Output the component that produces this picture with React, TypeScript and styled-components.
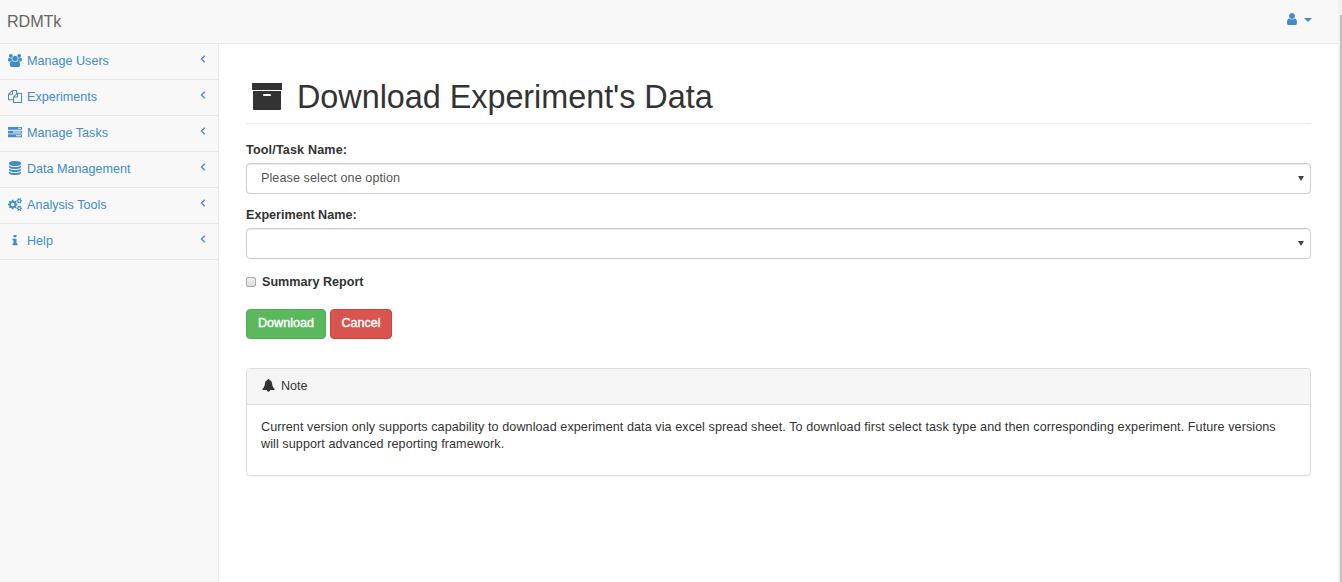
import React from "react";
import styled, { createGlobalStyle } from "styled-components";

const GlobalStyle = createGlobalStyle`
  * { box-sizing: border-box; }
  body {
    margin: 0;
    background: #fff;
    color: #333;
    font: 12.6px/18px "Liberation Sans", Arial, sans-serif;
    overflow: hidden;
  }
`;

const Page = styled.div`
  display: flex;
  height: 582px;
  width: 1342px;
`;

const Shell = styled.div`
  flex: 1;
  display: flex;
  flex-direction: column;
  min-width: 0;
`;

const ScrollTrack = styled.div`
  width: 4px;
  padding: 15px 0 0 2px;
  background: #f1f1f1;
`;

const ScrollThumb = styled.div`
  height: 100%;
  background: #c1c1c1;
`;

const Navbar = styled.header`
  height: 44px;
  flex: none;
  display: flex;
  justify-content: space-between;
  padding: 0 26px 0 7px;
  background: #f8f8f8;
  border-bottom: 1px solid #e7e7e7;
`;

const Brand = styled.span`
  font-size: 16.2px;
  line-height: 42px;
  letter-spacing: -0.1px;
  color: #666;
`;

const UserMenu = styled.a`
  display: flex;
  align-items: center;
  height: 38px;
  gap: 5px;
  color: #428bca;
`;

const Caret = styled.i`
  width: 0;
  margin-top: 2px;
  border-top: 4px solid #428bca;
  border-left: 4px solid transparent;
  border-right: 4px solid transparent;
`;

const Columns = styled.div`
  flex: 1;
  display: flex;
`;

const Sidebar = styled.nav`
  width: 219px;
  flex: none;
  background: #f8f8f8;
  border-right: 1px solid #e7e7e7;
`;

const NavItem = styled.a`
  display: flex;
  align-items: flex-start;
  height: 36px;
  padding: 8px 10px 0 8px;
  color: #428bca;
  border-bottom: 1px solid #e7e7e7;
`;

const NavIcon = styled.span`
  width: 14px;
  height: 15px;
  margin-right: 5px;
  display: flex;
  align-items: flex-end;
  justify-content: center;
`;

const NavLabel = styled.span`
  flex: 1;
`;

const Chevron = styled.svg`
  width: 6px;
  height: 8px;
  margin: 3px 2px 0 0;
  fill: none;
  stroke: #428bca;
  stroke-width: 1.3;
`;

const Main = styled.main`
  flex: 1;
  padding: 0 27px;
`;

const PageHeader = styled.h1`
  display: flex;
  align-items: center;
  height: 80px;
  margin: 0 0 17px;
  padding: 26px 0 0 6px;
  gap: 15px;
  border-bottom: 1px solid #eee;
  font-size: 32.4px;
  line-height: 36px;
  letter-spacing: -0.04px;
  font-weight: 400;
`;

const Field = styled.div`
  margin-bottom: 12px;
`;

const Label = styled.label<{ $spacing?: number }>`
  display: block;
  height: 22px;
  font-weight: 700;
  letter-spacing: ${(p) => p.$spacing ?? 0}px;
`;

const Select = styled.div`
  display: flex;
  justify-content: space-between;
  height: 31px;
  padding: 5px 6px 0 14px;
  color: #555;
  letter-spacing: 0.08px;
  border: 1px solid #ccc;
  border-radius: 4px;
  box-shadow: inset 0 1px 1px rgba(0, 0, 0, 0.075);
`;

const SelectArrow = styled.i`
  width: 0;
  height: 0;
  margin-top: 7px;
  border-top: 5px solid #444;
  border-left: 3px solid transparent;
  border-right: 3px solid transparent;
`;

const CheckRow = styled.label`
  display: flex;
  align-items: center;
  gap: 6px;
  height: 18px;
  margin-top: 14px;
  font-weight: 700;
`;

const Checkbox = styled.span`
  width: 10px;
  height: 10px;
  margin-top: -1px;
  border: 1px solid #aaa;
  border-radius: 2px;
  background: linear-gradient(#eee, #dcdcdc);
`;

const Actions = styled.div`
  display: flex;
  gap: 4px;
  margin: 18px 0 29px;
`;

const Button = styled.button<{ $fill: string; $edge: string; $width: number }>`
  width: ${(p) => p.$width}px;
  height: 30px;
  padding: 0 0 2px;
  font: 400 12.6px/18px "Liberation Sans", Arial, sans-serif;
  -webkit-text-stroke: 0.4px #fff;
  color: #fff;
  background: ${(p) => p.$fill};
  border: 1px solid ${(p) => p.$edge};
  border-radius: 4px;
`;

const Panel = styled.section`
  height: 108px;
  border: 1px solid #ddd;
  border-radius: 4px;
  box-shadow: 0 1px 1px rgba(0, 0, 0, 0.05);
`;

const PanelHeading = styled.div`
  display: flex;
  gap: 6px;
  height: 36px;
  padding: 8px 15px;
  background: #f5f5f5;
  border-bottom: 1px solid #ddd;
  border-radius: 3px 3px 0 0;
`;

const BellIcon = styled.svg`
  width: 13px;
  height: 13px;
  margin-top: 2px;
  fill: #333;
`;

const PanelBody = styled.p`
  margin: 0;
  padding: 14px 14px;
  line-height: 17px;
  letter-spacing: 0.074px;
`;

const smallCog = (y: number) =>
  `M1920 ${y}v140q0 16-149 31-12 27-30 52 51 113 51 138 0 4-4 7-122 71-124 71-8 0-46-47t-52-68q-20 2-30 2t-30-2q-14 21-52 68t-46 47q-2 0-124-71-4-3-4-7 0-25 51-138-18-25-30-52-149-15-149-31v-140q0-16 149-31 13-29 30-52-51-113-51-138 0-4 4-7 4-2 35-20t59-34 30-16q8 0 46 46.5t52 67.5q20-2 30-2t30 2q51-71 92-112l6-2q4 0 124 70 4 3 4 7 0 25-51 138 17 23 30 52 149 15 149 31z`;

const diskBand = (y: number) =>
  `M896 ${y}q237 0 443-43t325-127v170q0 69-103 128t-280 93.5-385 34.5-385-34.5-280-93.5-103-128v-170q119 84 325 127t443 43z`;

const taskBar = (y: number) =>
  `M1792 ${y}v256q0 26-19 45t-45 19h-1664q-26 0-45-19t-19-45v-256q0-26 19-45t45-19h1664q26 0 45 19t19 45z`;

const icons = {
  users: {
    width: 1920,
    d: "M593 896q-162 5-265 128h-134q-82 0-138-40.5t-56-118.5q0-353 124-353 6 0 43.5 21t97.5 42.5 119 21.5q67 0 133-23-5 37-5 66 0 139 81 256zm1071 637q0 120-73 189.5t-194 69.5h-874q-121 0-194-69.5t-73-189.5q0-53 3.5-103.5t14-109 26.5-108.5 43-97.5 62-81 85.5-53.5 111.5-20q10 0 43 21.5t73 48 107 48 135 21.5 135-21.5 107-48 73-48 43-21.5q61 0 111.5 20t85.5 53.5 62 81 43 97.5 26.5 108.5 14 109 3.5 103.5zm-1024-1277q0 106-75 181t-181 75-181-75-75-181 75-181 181-75 181 75 75 181zm704 384q0 159-112.5 271.5t-271.5 112.5-271.5-112.5-112.5-271.5 112.5-271.5 271.5-112.5 271.5 112.5 112.5 271.5zm576 225q0 78-56 118.5t-138 40.5h-134q-103-123-265-128 81-117 81-256 0-29-5-66 66 23 133 23 59 0 119-21.5t97.5-42.5 43.5-21q124 0 124 353zm-128-609q0 106-75 181t-181 75-181-75-75-181 75-181 181-75 181 75 75 181z",
  },
  files: {
    width: 1792,
    d: "M1696 384q40 0 68 28t28 68v1216q0 40-28 68t-68 28h-960q-40 0-68-28t-28-68v-288h-544q-40 0-68-28t-28-68v-672q0-40 20-88t48-76l408-408q28-28 76-48t88-20h416q40 0 68 28t28 68v328q68-40 128-40h416zm-544 213l-299 299h299v-299zm-640-384l-299 299h299v-299zm196 647l316-316v-416h-384v416q0 40-28 68t-68 28h-416v640h512v-256q0-40 20-88t48-76zm956 804v-1152h-384v416q0 40-28 68t-68 28h-416v640h896z",
  },
  tasks: {
    width: 1792,
    d: `M1024 1408h640v-128h-640v128zM640 896h1024v-128h-1024v128zM1280 384h384v-128h-384v128z${taskBar(1216)}${taskBar(704)}${taskBar(192)}`,
  },
  database: {
    width: 1792,
    d: `${diskBand(768)}${diskBand(1536)}${diskBand(1152)}M896 0q208 0 385 34.5t280 93.5 103 128v128q0 69-103 128t-280 93.5-385 34.5-385-34.5-280-93.5-103-128v-128q0-69 103-128t280-93.5 385-34.5z`,
  },
  cogs: {
    width: 1920,
    d: `M896 896q0-106-75-181t-181-75-181 75-75 181 75 181 181 75 181-75 75-181zm768 512q0-52-38-90t-90-38-90 38-38 90q0 53 37.5 90.5t90.5 37.5 90.5-37.5 37.5-90.5zm0-1024q0-52-38-90t-90-38-90 38-38 90q0 53 37.5 90.5t90.5 37.5 90.5-37.5 37.5-90.5zm-384 421v185q0 10-7 19.5t-16 10.5l-155 24q-11 35-32 76 34 48 90 115 7 11 7 20 0 12-7 19-23 30-82.5 89.5t-78.5 59.5q-11 0-21-7l-115-90q-37 19-77 31-11 108-23 155-7 24-30 24h-186q-11 0-20-7.5t-10-17.5l-23-153q-34-10-75-31l-118 89q-7 7-20 7-11 0-21-8-144-133-144-160 0-9 7-19 10-14 41-53t47-61q-23-44-35-82l-152-24q-10-1-17-9.5t-7-19.5v-185q0-10 7-19.5t16-10.5l155-24q11-35 32-76-34-48-90-115-7-11-7-20 0-12 7-20 22-30 82-89t79-59q11 0 21 7l115 90q34-18 77-32 11-108 23-154 7-24 30-24h186q11 0 20 7.5t10 17.5l23 153q34 10 75 31l118-89q8-7 20-7 11 0 21 8 144 133 144 160 0 8-7 19-12 16-42 54t-45 60q23 48 34 82l152 23q10 2 17 10.5t7 19.5z${smallCog(1338)}${smallCog(314)}`,
  },
  info: {
    width: 1792,
    d: "M1216 1344v128q0 26-19 45t-45 19h-512q-26 0-45-19t-19-45v-128q0-26 19-45t45-19h64v-384h-64q-26 0-45-19t-19-45v-128q0-26 19-45t45-19h384q26 0 45 19t19 45v576h64q26 0 45 19t19 45zm-128-1152v192q0 26-19 45t-45 19h-256q-26 0-45-19t-19-45v-192q0-26 19-45t45-19h256q26 0 45 19t19 45z",
  },
  user: {
    width: 1792,
    d: "M1536 1399q0 109-62.5 187t-150.5 78h-854q-88 0-150.5-78t-62.5-187q0-85 8.5-160.5t31.5-152 58.5-131 94-89 134.5-34.5q131 128 313 128t313-128q76 0 134.5 34.5t94 89 58.5 131 31.5 152 8.5 160.5zm-256-887q0 159-112.5 271.5t-271.5 112.5-271.5-112.5-112.5-271.5 112.5-271.5 271.5-112.5 271.5 112.5 112.5 271.5z",
  },
};

type IconName = keyof typeof icons;

function Icon({ name, height = 13 }: { name: IconName; height?: number }) {
  const { width, d } = icons[name];
  return (
    <svg
      width={14}
      height={height}
      viewBox={`0 0 ${width} 1792`}
      preserveAspectRatio="none"
      fill="currentColor"
      fillRule={name === "users" ? "nonzero" : "evenodd"}
    >
      <path d={d} />
    </svg>
  );
}

const items: { icon: IconName; label: string; height?: number }[] = [
  { icon: "users", label: "Manage Users" },
  { icon: "files", label: "Experiments" },
  { icon: "tasks", label: "Manage Tasks" },
  { icon: "database", label: "Data Management", height: 14 },
  { icon: "cogs", label: "Analysis Tools" },
  { icon: "info", label: "Help" },
];

export default function App() {
  return (
    <Page>
      <GlobalStyle />
      <Shell>
        <Navbar>
          <Brand>RDMTk</Brand>
          <UserMenu>
            <Icon name="user" height={14} />
            <Caret />
          </UserMenu>
        </Navbar>
        <Columns>
          <Sidebar>
            {items.map((item) => (
              <NavItem key={item.label}>
                <NavIcon>
                  <Icon name={item.icon} height={item.height} />
                </NavIcon>
                <NavLabel>{item.label}</NavLabel>
                <Chevron viewBox="0 0 6 8">
                  <path d="M4.8 .8 1.5 4 4.8 7.2" />
                </Chevron>
              </NavItem>
            ))}
          </Sidebar>
          <Main>
            <PageHeader>
              <svg width="30" height="27" viewBox="0 0 30 27">
                <path
                  fill="#333"
                  fillRule="evenodd"
                  d="M.5 0h29q.5 0 .5.5V7H0V.5Q0 0 .5 0zM1 8h28v18q0 1-1 1H2q-1 0-1-1zM12 11q-1 0-1 1t1 1h6q1 0 1-1t-1-1z"
                />
              </svg>
              Download Experiment's Data
            </PageHeader>
            <Field>
              <Label $spacing={0.15}>Tool/Task Name:</Label>
              <Select>
                Please select one option
                <SelectArrow />
              </Select>
            </Field>
            <Field>
              <Label>Experiment Name:</Label>
              <Select>
                <span />
                <SelectArrow />
              </Select>
            </Field>
            <CheckRow>
              <Checkbox />
              Summary Report
            </CheckRow>
            <Actions>
              <Button $fill="#5cb85c" $edge="#4cae4c" $width={80}>
                Download
              </Button>
              <Button $fill="#d9534f" $edge="#d43f3a" $width={62}>
                Cancel
              </Button>
            </Actions>
            <Panel>
              <PanelHeading>
                <BellIcon viewBox="0 0 13 13">
                  <path d="M6.5 0q1 0 1 1 2.2.6 2.5 3c.3 2.700.7 4.400 2.500 5.700V11H8.200q-.2 1.700-1.700 1.700T4.800 11H.5V9.700C2.300 8.400 2.700 6.700 3 4q.3-2.400 2.500-3 0-1 1-1z" />
                </BellIcon>
                Note
              </PanelHeading>
              <PanelBody>
                Current version only supports capability to download experiment data via excel spread
                sheet. To download first select task type and then corresponding experiment. Future
                versions will support advanced reporting framework.
              </PanelBody>
            </Panel>
          </Main>
        </Columns>
      </Shell>
      <ScrollTrack>
        <ScrollThumb />
      </ScrollTrack>
    </Page>
  );
}
